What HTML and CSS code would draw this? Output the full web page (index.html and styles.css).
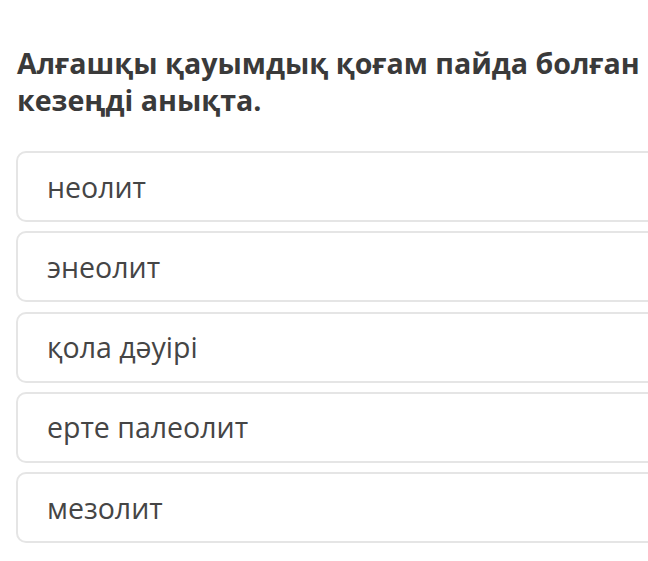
FILE: index.html
```html
<!DOCTYPE html>
<html lang="kk">
<head>
<meta charset="utf-8">
<link rel="stylesheet" href="styles.css">
</head>
<body>
<div class="page">
  <h1 class="question">Алғашқы қауымдық қоғам пайда болған кезеңді анықта.</h1>
  <div class="options">
    <div class="option">неолит</div>
    <div class="option">энеолит</div>
    <div class="option">қола дәуірі</div>
    <div class="option">ерте палеолит</div>
    <div class="option">мезолит</div>
  </div>
</div>
</body>
</html>
```

FILE: styles.css
```css
html, body {
  margin: 0;
  padding: 0;
  background: #ffffff;
}
.page {
  width: 648px;
  box-sizing: border-box;
  overflow: hidden;
  padding: 44px 0 0 16px;
  font-family: "Open Sans", "Noto Sans", sans-serif;
}
.question {
  margin: 0;
  width: 660px;
  font-size: 28.6px;
  font-weight: 700;
  line-height: 37px;
  color: #3a3a3a;
  padding-left: 1px;
}
.options {
  margin-top: 33px;
  margin-right: -30px;
  display: flex;
  flex-direction: column;
  gap: 9.3px;
}
.option {
  height: 67px;
  border: 2px solid #e5e5e5;
  border-radius: 10px;
  box-sizing: content-box;
  padding: 0 0 0 29px;
  display: flex;
  align-items: center;
  font-size: 28.5px;
  color: #454545;
}
```
